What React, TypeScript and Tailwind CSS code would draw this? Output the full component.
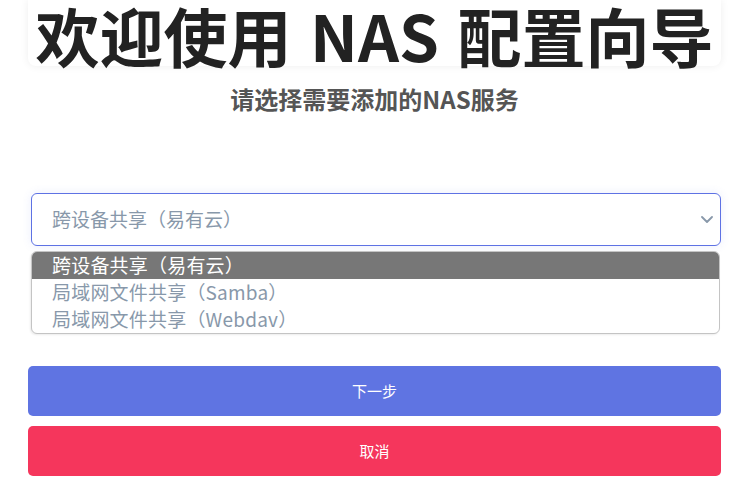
const font = { fontFamily: '"Noto Sans CJK SC", "Noto Sans", sans-serif' };

const options = ['跨设备共享（易有云）', '局域网文件共享（Samba）', '局域网文件共享（Webdav）'];

export default function App() {
  const selected = 0;

  return (
    <main className="min-h-screen w-[749px] bg-white px-[28px]" style={font}>
      <div className="h-[66px] rounded-b-lg bg-white pt-[3px] text-center text-[64px] font-bold leading-[63px] text-[#222] shadow-[0_0_8px_rgba(0,0,0,0.07)] [word-spacing:4px]">
        欢迎使用 NAS 配置向导
      </div>

      <h2 className="mt-[18px] text-center text-[24px] font-bold leading-[30px] text-[#555]">请选择需要添加的NAS服务</h2>

      <div className="ml-[3px] mt-[79px] flex h-[53px] items-center justify-between rounded-md border border-[#5e72e4] bg-white pl-[20px] pr-[7px] text-[19px] text-[#8898aa] shadow-[0_0_10px_rgba(94,114,228,0.12)]">
        <span>{options[selected]}</span>
        <svg width="12" height="7" viewBox="0 0 12 7" fill="none">
          <polyline points="1,1 6,6 11,1" stroke="#8898aa" strokeWidth="1.8" strokeLinecap="round" strokeLinejoin="round" />
        </svg>
      </div>

      <div className="ml-[3px] mr-px mt-[5px] overflow-hidden rounded-md border border-[#c4c4c4] bg-white shadow-[-1px_1px_2px_rgba(0,0,0,0.08)]">
        {options.map((opt, i) => (
          <div
            key={opt}
            className={
              i === selected
                ? 'flex h-[27px] items-center bg-[#777777] pl-[20px] text-[19px] tracking-[0.2px] text-white'
                : 'flex h-[27px] items-center pl-[20px] text-[19px] tracking-[0.2px] text-[#8898aa]'
            }
          >
            {opt}
          </div>
        ))}
      </div>

      <div className="mt-[32px] flex flex-col gap-[10px]">
        <button className="h-[50px] w-full rounded-[5px] bg-[#5f74e2] text-[15px] text-white">下一步</button>
        <button className="h-[50px] w-full rounded-[5px] bg-[#f5365c] text-[15px] text-white">取消</button>
      </div>
    </main>
  );
}
